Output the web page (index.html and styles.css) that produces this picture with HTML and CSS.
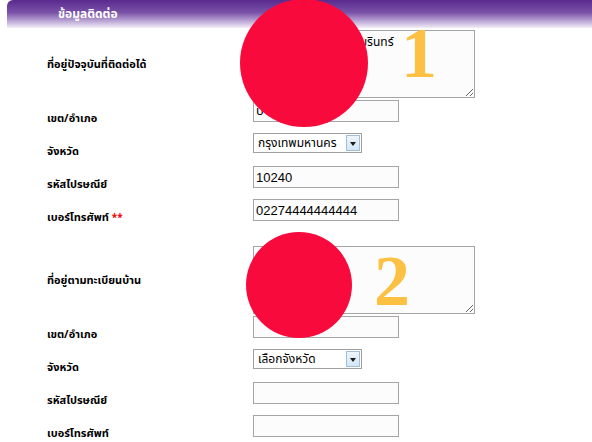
FILE: index.html
```html
<!DOCTYPE html>
<html lang="th">
<head>
  <meta charset="UTF-8" />
  <title>ข้อมูลติดต่อ</title>
  <link rel="stylesheet" href="styles.css">
</head>
<body>
  <div class="page">

    <!-- Section header -->
    <div class="section-head">ข้อมูลติดต่อ</div>

    <!-- Contact form -->
    <div class="form">
      <div class="row tall first">
        <label>ที่อยู่ปัจจุบันที่ติดต่อได้</label>
        <textarea class="area">111/22 ซ.9 ถ.อรุณอมรินทร์</textarea>
      </div>
      <div class="row">
        <label>เขต/อำเภอ</label>
        <input class="field" type="text" value="บางกอกน้อย">
      </div>
      <div class="row">
        <label>จังหวัด</label>
        <div class="select"><span>กรุงเทพมหานคร</span><i class="arrow"></i></div>
      </div>
      <div class="row">
        <label>รหัสไปรษณีย์</label>
        <input class="field" type="text" value="10240">
      </div>
      <div class="row">
        <label>เบอร์โทรศัพท์ <span class="req">**</span></label>
        <input class="field" type="text" value="02274444444444">
      </div>

      <div class="row tall">
        <label>ที่อยู่ตามทะเบียนบ้าน</label>
        <textarea class="area"></textarea>
      </div>
      <div class="row">
        <label>เขต/อำเภอ</label>
        <input class="field" type="text" value="">
      </div>
      <div class="row">
        <label>จังหวัด</label>
        <div class="select"><span>เลือกจังหวัด</span><i class="arrow"></i></div>
      </div>
      <div class="row">
        <label>รหัสไปรษณีย์</label>
        <input class="field" type="text" value="">
      </div>
      <div class="row">
        <label>เบอร์โทรศัพท์</label>
        <input class="field" type="text" value="">
      </div>
    </div>

    <!-- Annotation marks over the form -->
    <div class="dot dot-one"></div>
    <div class="num num-one">1</div>
    <div class="dot dot-two"></div>
    <div class="num num-two">2</div>
  </div>
</body>
</html>
```

FILE: styles.css
```css
* {
  margin: 0;
  padding: 0;
  box-sizing: border-box;
}

body {
  font-family: Tahoma, "Noto Sans Thai", "Noto Sans", sans-serif;
  background-color: #fff;
  color: #000;
}

.page {
  position: relative;
  width: 592px;
  height: 442px;
  overflow: hidden;
}

/* Header bar */
.section-head {
  margin-left: 7px;
  height: 28px;
  padding: 5px 0 0 51px;
  border-top-left-radius: 6px;
  background: linear-gradient(#5a2a8e 0%, #7a52a8 45%, #c6b4dc 80%, #f2eef7 100%);
  color: #fff;
  font-size: 12px;
  font-weight: bold;
}

/* Form rows */
.form {
  padding-left: 47px;
}

.row {
  display: flex;
  align-items: flex-end;
  height: 22px;
  margin-top: 11px;
}

.row.tall {
  align-items: center;
  height: 68px;
  margin-top: 25px;
  margin-bottom: -9px;
}

.row.first {
  margin-top: 2px;
}

.row label {
  width: 206px;
  margin-bottom: -4px;
  font-size: 11px;
  font-weight: bold;
  line-height: 14px;
}

.row.tall label {
  margin-bottom: 0;
  padding-top: 2px;
}

.req {
  color: #e00;
  font-size: 10px;
}

.field {
  width: 146px;
  height: 22px;
  border: 1px solid #a5a5a5;
  background: #fcfcfc;
  padding: 1px 2px;
  font-family: "Liberation Sans", Arial, "Noto Sans Thai", sans-serif;
  font-size: 13px;
  color: #000;
}

.area {
  width: 222px;
  height: 68px;
  border: 1px solid #a5a5a5;
  background: #fcfcfc;
  padding: 2px 3px;
  font-family: Tahoma, "Noto Sans Thai", "Noto Sans", sans-serif;
  font-size: 12px;
  resize: both;
  overflow: hidden;
}

.select {
  display: flex;
  align-items: center;
  justify-content: space-between;
  width: 109px;
  height: 20px;
  margin-bottom: 2px;
  border: 1px solid #a0a0a0;
  background: #fff;
  padding: 0 1px 0 4px;
  font-size: 12px;
}

.arrow {
  position: relative;
  width: 14px;
  height: 16px;
  border: 1px solid #9ec0dc;
  background: linear-gradient(#eef5fb, #d4e6f4);
}

.arrow::after {
  content: "";
  position: absolute;
  left: 3px;
  top: 6px;
  border-left: 3px solid transparent;
  border-right: 3px solid transparent;
  border-top: 4px solid #1a1a1a;
}

/* Annotation marks */
.dot {
  position: absolute;
  border-radius: 50%;
  background-color: #f80a3d;
}

.dot-one {
  left: 240px;
  top: -1px;
  width: 128px;
  height: 128px;
}

.dot-two {
  left: 246px;
  top: 232px;
  width: 106px;
  height: 106px;
}

.num {
  position: absolute;
  font-family: "Liberation Serif", serif;
  font-weight: bold;
  font-size: 72px;
  line-height: 72px;
  color: #fcc043;
}

.num-one {
  left: 401px;
  top: 17px;
}

.num-two {
  left: 374px;
  top: 245px;
}
```
